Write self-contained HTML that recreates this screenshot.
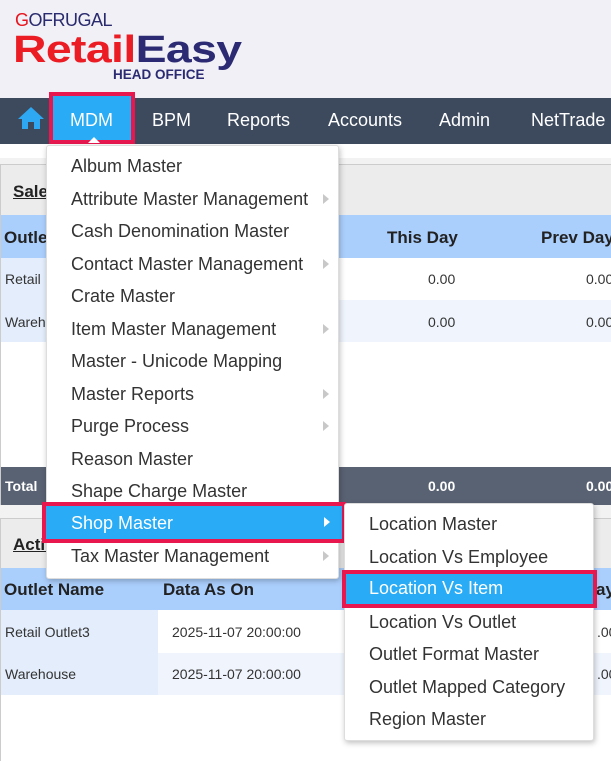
<!DOCTYPE html>
<html><head><style>
*{margin:0;padding:0;box-sizing:border-box}
body{width:611px;height:761px;overflow:hidden;background:#fff;font-family:"Liberation Sans",sans-serif;position:relative}
.a{position:absolute;white-space:nowrap}
.nav span{position:absolute;top:110px;color:#fff;font-size:18px}
.mi{position:absolute;left:0;width:100%;height:32.5px;line-height:32.5px;padding-left:24px;font-size:18px;color:#333;white-space:nowrap}
.arr{position:absolute;right:9px;top:11px;width:0;height:0;border-left:6px solid #c8c8c8;border-top:5px solid transparent;border-bottom:5px solid transparent}
.smi{position:absolute;left:0;width:100%;height:32.5px;line-height:32.5px;padding-left:24px;font-size:18px;color:#333;white-space:nowrap}
.t{position:absolute;font-size:14px;color:#333;white-space:nowrap}
.b{position:absolute;font-size:17px;font-weight:bold;color:#222;white-space:nowrap}
</style></head><body>
<div class="a" style="left:0;top:0;width:611px;height:98px;background:#f0f0f6"></div>
<div class="a" style="left:15px;top:10px;font-size:18px;color:#2a2a6e;letter-spacing:-0.5px"><span style="color:#e8141e">G</span>OFRUGAL</div>
<div class="a" style="left:13px;top:31px;font-size:38px;font-weight:bold;letter-spacing:-0.5px;line-height:38px;transform:scaleX(1.22);transform-origin:0 0"><span style="color:#ec1c24">Retail</span><span style="color:#2b2a72">Easy</span></div>
<div class="a" style="left:113px;top:67px;font-size:13.5px;font-weight:bold;color:#2b2a72">HEAD OFFICE</div>
<div class="a" style="left:0;top:98px;width:611px;height:46px;background:#3d4a5e"></div>
<svg class="a" style="left:17px;top:106px" width="28" height="24" viewBox="0 0 28 24"><path d="M14 1 L27 13 L23 13 L23 23 L17 23 L17 16 L11 16 L11 23 L5 23 L5 13 L1 13 Z" fill="#2ea8f3"/></svg>
<div class="a" style="left:49px;top:92px;width:86px;height:52px;border:4px solid #e8184f;background:#29abf5"></div>
<div class="a" style="left:88px;top:137px;width:0;height:0;border-left:6px solid transparent;border-right:6px solid transparent;border-bottom:6px solid #fff"></div>
<div class="nav"><span style="left:70px">MDM</span><span style="left:152px">BPM</span><span style="left:227px">Reports</span><span style="left:328px">Accounts</span><span style="left:439px">Admin</span><span style="left:531px">NetTrade</span></div>

<div class="a" style="left:0;top:158px;width:611px;height:360px;background:#f2f2f2"></div>
<div class="a" style="left:0;top:164px;width:611px;height:341px;background:#fff;border-top:1px solid #ccc;border-left:1px solid #ccc"></div>
<div class="a" style="left:1px;top:165px;width:610px;height:50px;background:#ececec"></div>
<div class="b" style="left:13px;top:182px;text-decoration:underline">Sales</div>
<div class="a" style="left:1px;top:215px;width:610px;height:43px;background:#abcffd"></div>
<div class="b" style="left:4px;top:228px">Outlet</div>
<div class="b" style="left:387px;top:228px">This Day</div>
<div class="b" style="left:541px;top:228px">Prev Day</div>
<div class="a" style="left:1px;top:300px;width:610px;height:42px;background:#f0f5fd"></div>
<div class="a" style="left:1px;top:258px;width:45px;height:84px;background:#e3edfb"></div>
<div class="t" style="left:5px;top:271px">Retail</div><div class="t" style="left:5px;top:314px">Wareh</div>
<div class="t" style="left:428px;top:271px">0.00</div><div class="t" style="left:586px;top:271px">0.00</div>
<div class="t" style="left:428px;top:314px">0.00</div><div class="t" style="left:586px;top:314px">0.00</div>
<div class="a" style="left:1px;top:467px;width:610px;height:38px;background:#596273"></div>
<div class="t" style="left:5px;top:478px;color:#fff;font-weight:bold">Total</div>
<div class="t" style="left:428px;top:478px;color:#fff;font-weight:bold">0.00</div>
<div class="t" style="left:586px;top:478px;color:#fff;font-weight:bold">0.00</div>

<div class="a" style="left:0;top:518px;width:611px;height:243px;background:#fff;border-top:1px solid #ccc;border-left:1px solid #ccc"></div>
<div class="a" style="left:1px;top:519px;width:610px;height:49px;background:#ececec"></div>
<div class="b" style="left:13px;top:535px;text-decoration:underline">Activity</div>
<div class="a" style="left:1px;top:568px;width:610px;height:42px;background:#abcffd"></div>
<div class="b" style="left:4px;top:580px">Outlet Name</div>
<div class="b" style="left:163px;top:580px">Data As On</div>
<div class="b" style="left:596px;top:580px">ay</div>
<div class="a" style="left:1px;top:653px;width:610px;height:42px;background:#f0f5fd"></div>
<div class="a" style="left:1px;top:610px;width:157px;height:85px;background:#e3edfb"></div>
<div class="t" style="left:5px;top:624px">Retail Outlet3</div><div class="t" style="left:5px;top:666px">Warehouse</div>
<div class="t" style="left:172px;top:624px">2025-11-07 20:00:00</div><div class="t" style="left:172px;top:666px">2025-11-07 20:00:00</div>
<div class="t" style="left:597px;top:624px">.00</div><div class="t" style="left:597px;top:666px">.00</div>

<div class="a" style="left:46px;top:145px;width:293px;height:434px;background:#fff;border:1px solid #ddd;border-radius:3px;box-shadow:1px 2px 6px rgba(0,0,0,.25)">
<div class="mi" style="top:4px">Album Master</div>
<div class="mi" style="top:36.5px">Attribute Master Management<i class="arr"></i></div>
<div class="mi" style="top:69px">Cash Denomination Master</div>
<div class="mi" style="top:101.5px">Contact Master Management<i class="arr"></i></div>
<div class="mi" style="top:134px">Crate Master</div>
<div class="mi" style="top:166.5px">Item Master Management<i class="arr"></i></div>
<div class="mi" style="top:199px">Master - Unicode Mapping</div>
<div class="mi" style="top:231.5px">Master Reports<i class="arr"></i></div>
<div class="mi" style="top:264px">Purge Process<i class="arr"></i></div>
<div class="mi" style="top:296.5px">Reason Master</div>
<div class="mi" style="top:329px">Shape Charge Master</div>
<div class="mi" style="top:394px">Tax Master Management<i class="arr"></i></div>
</div>
<div class="a" style="left:42px;top:502px;width:304px;height:41px;border:4px solid #e8184f;background:#29abf5"></div>
<div class="a" style="left:71px;top:513px;font-size:18px;color:#fff">Shop Master</div>
<div class="a" style="left:324px;top:517px;width:0;height:0;border-left:6px solid #fff;border-top:5px solid transparent;border-bottom:5px solid transparent"></div>

<div class="a" style="left:344px;top:503px;width:250px;height:238px;background:#fff;border:1px solid #ddd;border-radius:3px;box-shadow:1px 2px 6px rgba(0,0,0,.25)">
<div class="smi" style="top:4px">Location Master</div>
<div class="smi" style="top:36.5px">Location Vs Employee</div>
<div class="smi" style="top:101.5px">Location Vs Outlet</div>
<div class="smi" style="top:134px">Outlet Format Master</div>
<div class="smi" style="top:166.5px">Outlet Mapped Category</div>
<div class="smi" style="top:199px">Region Master</div>
</div>
<div class="a" style="left:342px;top:570px;width:255px;height:38px;border:4px solid #e8184f;background:#29abf5"></div>
<div class="a" style="left:369px;top:578px;font-size:18px;color:#fff">Location Vs Item</div>
</body></html>
